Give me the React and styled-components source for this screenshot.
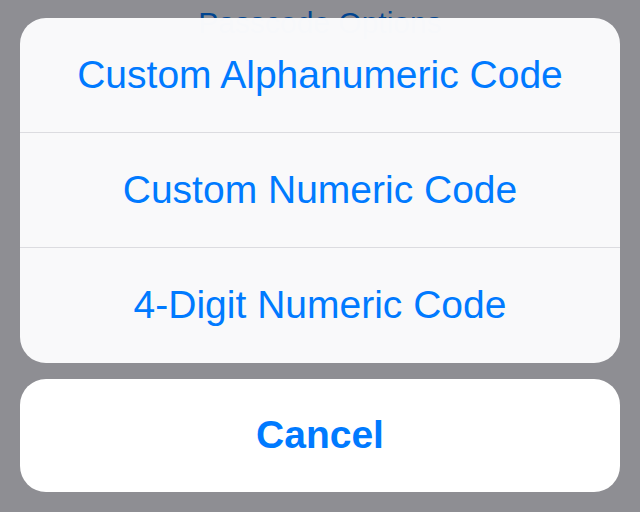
import React from "react";
import styled, { createGlobalStyle } from "styled-components";

const Global = createGlobalStyle`
  html, body { margin: 0; padding: 0; background: #8e8e93; }
  body { font-family: "Liberation Sans", Arial, sans-serif; }
`;

const Screen = styled.div`
  position: relative;
  width: 640px;
  height: 512px;
  box-sizing: border-box;
  padding: 18px 20px 20px;
  background: #8e8e93;
  overflow: hidden;
  display: flex;
  flex-direction: column;
  gap: 16px;
`;

const BehindTitle = styled.div`
  position: absolute;
  left: 0;
  right: 0;
  top: 5px;
  text-align: center;
  font-size: 30px;
  line-height: 36px;
  color: #00448f;
  z-index: 0;
`;

const Group = styled.div`
  position: relative;
  z-index: 1;
  display: flex;
  flex-direction: column;
  border-radius: 26px;
  overflow: hidden;
  background: ${(p) => (p.$solid ? "#ffffff" : "rgba(251, 251, 252, 0.985)")};
`;

const Option = styled.div`
  height: ${(p) => p.$h}px;
  display: flex;
  align-items: center;
  justify-content: center;
  font-size: 39px;
  font-weight: ${(p) => (p.$bold ? 700 : 400)};
  color: #007aff;
  border-top: ${(p) => (p.$sep ? "1px solid #dcdce0" : "none")};
`;

export default function App() {
  const items = [
    "Custom Alphanumeric Code",
    "Custom Numeric Code",
    "4-Digit Numeric Code",
  ];
  return (
    <>
      <Global />
      <Screen>
        <BehindTitle>Passcode Options</BehindTitle>
        <Group>
          {items.map((t, i) => (
            <Option key={t} $h={i === 0 ? 114 : 115} $sep={i > 0}>
              {t}
            </Option>
          ))}
        </Group>
        <Group $solid>
          <Option $h={114} $bold>
            Cancel
          </Option>
        </Group>
      </Screen>
    </>
  );
}
